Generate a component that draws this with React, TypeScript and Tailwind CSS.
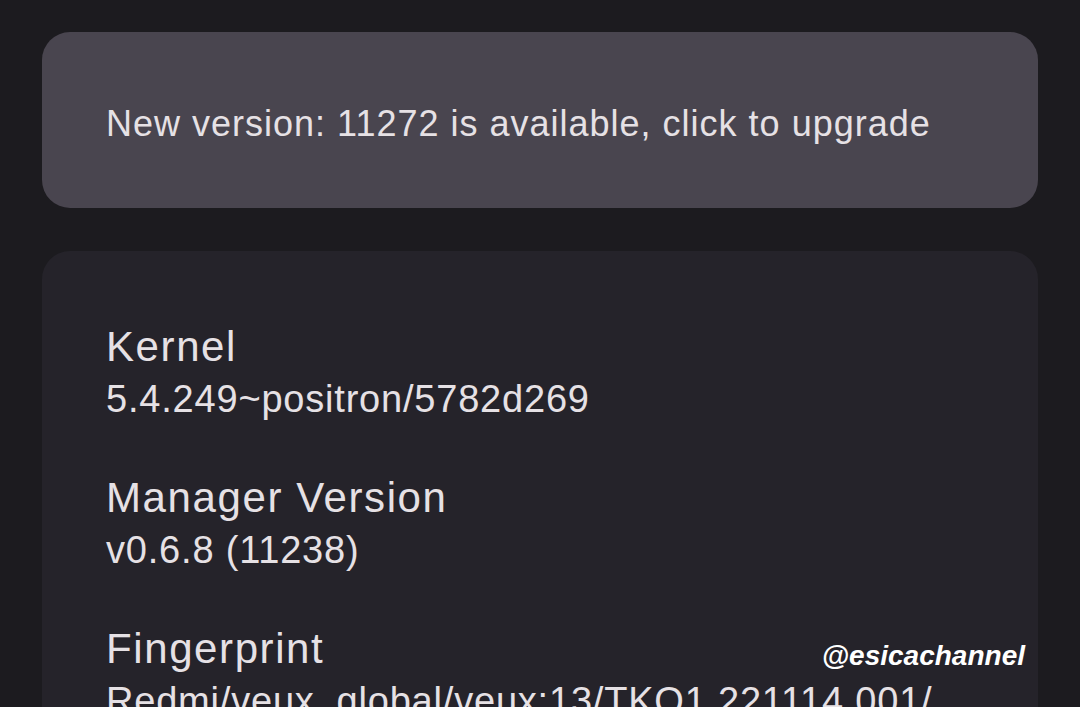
import React from "react";

const info = [
  { title: "Kernel", value: "5.4.249~positron/5782d269" },
  { title: "Manager Version", value: "v0.6.8 (11238)" },
  { title: "Fingerprint", value: "Redmi/veux_global/veux:13/TKQ1.221114.001/" },
];

export default function App() {
  return (
    <div
      className="relative h-[707px] w-[1080px] overflow-hidden bg-[#1c1b1f] px-[42px] pt-[32px] text-[#e6e1e5]"
      style={{ fontFamily: "'Liberation Sans', Arial, sans-serif" }}
    >
      {/* Update banner */}
      <div className="flex h-[176px] items-center rounded-[28px] bg-[#49454f] px-[64px] pt-[7px]">
        <span className="text-[36px] leading-none tracking-[1px] whitespace-nowrap">
          New version: 11272 is available, click to upgrade
        </span>
      </div>

      {/* Info card */}
      <div className="mt-[43px] rounded-[28px] bg-[#25232a] px-[64px] pt-[72px] pb-10">
        <div className="flex flex-col gap-[53px]">
          {info.map((item) => (
            <div key={item.title} className="flex flex-col">
              <span className="text-[42px] leading-[48px] tracking-[1.6px]">{item.title}</span>
              <span className="mt-[6px] text-[38px] leading-[44px] tracking-[0.8px] whitespace-nowrap">
                {item.value}
              </span>
            </div>
          ))}
        </div>
      </div>

      {/* Watermark */}
      <div className="absolute top-[635px] right-[55px] text-[28px] font-bold italic text-white">
        @esicachannel
      </div>
    </div>
  );
}
